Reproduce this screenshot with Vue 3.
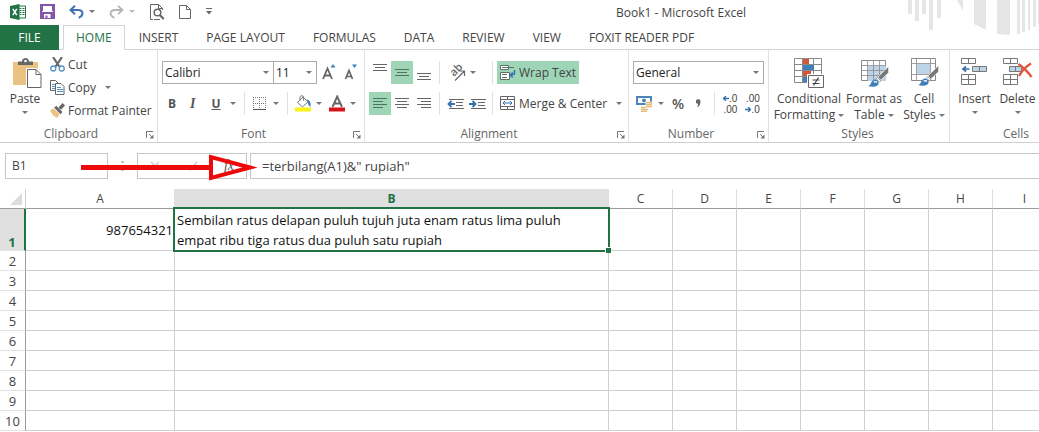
<script setup>
import { ref } from 'vue'

const tabs = ['HOME', 'INSERT', 'PAGE LAYOUT', 'FORMULAS', 'DATA', 'REVIEW', 'VIEW', 'FOXIT READER PDF']
const activeTab = ref('HOME')

const columns = ['A', 'B', 'C', 'D', 'E', 'F', 'G', 'H', 'I']
const rows = [1, 2, 3, 4, 5, 6, 7, 8, 9, 10]
const cells = {
  A1: '987654321',
  B1: 'Sembilan ratus delapan puluh tujuh juta enam ratus lima puluh empat ribu tiga ratus dua puluh satu rupiah',
}
const cellName = ref('B1')
const formula = ref('=terbilang(A1)&" rupiah"')
</script>

<template>
  <div class="app">
    <svg class="symbols" aria-hidden="true">
      <symbol id="launcher" viewBox="0 0 8 8">
        <path d="M.5 7V.5H7" fill="none" stroke="#777" />
        <path d="M3 3l3 3" stroke="#777" />
        <path d="M7.500 3.500v4h-4z" fill="#777" />
      </symbol>
      <symbol id="brush" viewBox="0 0 24 24">
        <path d="M22.500 1v6.500L14.500 15l-3-3z" fill="#777" stroke="#fff" stroke-width=".6" />
        <path d="M11 12.500l3.500 3.300-1.300 1.500-3.600-3.500z" fill="#fff" stroke="#777" stroke-width=".7" />
        <path d="M1 21.500c3-.5 2.800-3.300 4.300-5.300 1.500-1.900 4-2.300 5.700-.6 1.800 1.800 1.500 4.300-.5 5.500-2.500 1.500-6.500 1.400-9.500.4z" fill="#3f7fba" />
        <path d="M7 17.500c1.200-.9 2.600-.7 3.200.3" stroke="#fff" stroke-width="1.300" fill="none" />
      </symbol>
    </svg>

    <header class="titlebar">
      <div class="qat">
        <svg class="excel" width="17" height="16" viewBox="0 0 17 16" role="img" aria-label="Excel">
          <path d="M8 2h7.500v12H8" fill="#fff" stroke="#217346" />
          <path d="M9.500 4.500h2M12.500 4.500h2M9.500 6.500h2M12.500 6.500h2M9.500 8.500h2M12.500 8.500h2M9.500 10.500h2M12.500 10.500h2" stroke="#217346" stroke-width="1.200" />
          <path d="M0 2l9.500-2v16L0 14z" fill="#217346" />
          <path d="M2.800 4.800l4 6.400M6.800 4.800l-4 6.400" stroke="#fff" stroke-width="1.500" />
        </svg>
        <button class="ico save" aria-label="Save">
          <svg width="15" height="15" viewBox="0 0 15 15">
            <path d="M1 1h13v13H1z" fill="#fff" stroke="#8455a8" stroke-width="2" />
            <path d="M1 8h13v6H1z" fill="#8455a8" />
            <path d="M4 10h6.500v4H4z" fill="#fff" />
            <path d="M5.500 11.500h2V14h-2z" fill="#8455a8" />
            <path d="M2.500 1v6M12.500 1v6" stroke="#8455a8" />
          </svg>
        </button>
        <button class="ico undo" aria-label="Undo">
          <svg width="15" height="14" viewBox="0 0 15 14">
            <path d="M1.500 5h7.500c3 0 4.500 1.600 4.500 3.600 0 2.100-1.700 3.300-3.800 4.200" fill="none" stroke="#3e73b1" stroke-width="2" />
            <path d="M6 .8L1.500 5 6 9.200" fill="none" stroke="#3e73b1" stroke-width="2" />
          </svg>
          <i class="chev"></i>
        </button>
        <button class="ico redo" aria-label="Redo">
          <svg width="15" height="14" viewBox="0 0 15 14">
            <path d="M13.500 5H6C3 5 1.500 6.600 1.500 8.600c0 2.100 1.700 3.300 3.800 4.200" fill="none" stroke="#b5b5b5" stroke-width="1.800" />
            <path d="M9 .8L13.500 5 9 9.200" fill="none" stroke="#b5b5b5" stroke-width="1.800" />
          </svg>
          <i class="chev faint"></i>
        </button>
        <button class="ico preview" aria-label="Print Preview">
          <svg width="15" height="16" viewBox="0 0 15 16">
            <path d="M3 15.500H.5V.5h8l4 4V6M8.500.5v4h4" fill="none" stroke="#666" />
            <circle cx="7.500" cy="8.500" r="3.300" fill="#fff" stroke="#666" stroke-width="1.500" />
            <path d="M9.800 11l4 4" stroke="#666" stroke-width="2.200" />
            <path d="M4 15.500h6" stroke="#666" />
          </svg>
        </button>
        <button class="ico page" aria-label="New">
          <svg width="12" height="14" viewBox="0 0 12 14">
            <path d="M.5.5h7l4 4v9H.5zM7.500.5v4h4" fill="#fff" stroke="#666" />
          </svg>
        </button>
        <button class="ico more" aria-label="Customize Quick Access Toolbar">
          <svg width="6" height="7" viewBox="0 0 6 7">
            <path d="M0 .5h6" stroke="#666" />
            <path d="M0 3h6L3 6.500z" fill="#666" />
          </svg>
        </button>
      </div>
      <h1>Book1 - Microsoft Excel</h1>
      <svg class="decor" width="131" height="35" viewBox="0 0 131 35" aria-hidden="true">
        <path fill="#e6e6e6" d="M0 0h4v14H0zM7 0h4v21H7zM14 0h4v14h-4zM21 0h4v30h-4zM29 0h4v18h-4zM49 0h6v11zM66 0h12v30l-12-6zM89 0h13v35l-13-1zM109 0h3v34h-3zM114 0h3v32h-3zM120 0h2v30h-2zM125 0h3v27h-3zM130 0h1v24h-1z" />
      </svg>
    </header>

    <nav class="tabs">
      <button class="file">FILE</button>
      <button
        v-for="t in tabs"
        :key="t"
        class="tab"
        :class="{ active: t === activeTab }"
        @click="activeTab = t"
      >{{ t }}</button>
    </nav>

    <main class="ribbon">
      <section class="group clipboard" aria-label="Clipboard">
        <div class="body">
          <button class="big paste">
            <svg width="29" height="31" viewBox="0 0 29 31">
              <path d="M0 4h25v23H0z" fill="#eac282" />
              <path d="M5 7V3.500h4C9 1.500 10.500 0 12.500 0S16 1.500 16 3.500h4V7z" fill="#666" />
              <circle cx="12.500" cy="3" r="1.300" fill="#fff" />
              <path d="M14.500 11.500h8.500l5 5v13.500H14.500z" fill="#fff" stroke="#fff" stroke-width="3" />
              <path d="M14.500 11.500h8.500l5 5v13H14.500zM23 11.500v5h5" fill="#fff" stroke="#666" />
            </svg>
            <span>Paste</span>
            <i class="chev"></i>
          </button>
          <div class="stack">
            <button class="line">
              <svg width="15" height="15" viewBox="0 0 15 15">
                <path d="M3 0l6.300 9.500M12 0L5.700 9.500" stroke="#666" stroke-width="2.200" />
                <circle cx="3.300" cy="11.500" r="2.500" fill="#fff" stroke="#4f91c8" stroke-width="1.300" />
                <circle cx="11.700" cy="11.500" r="2.500" fill="#fff" stroke="#4f91c8" stroke-width="1.300" />
              </svg>
              <span>Cut</span>
            </button>
            <button class="line">
              <svg width="15" height="15" viewBox="0 0 15 15">
                <path d="M.5.500h5l3 3V10.500h-8z" fill="#fff" stroke="#666" />
                <path d="M2 4.500h4M2 6.500h4M2 8.500h4" stroke="#4f91c8" />
                <path d="M5.500 3.500h5.500l3 3v8H5.500z" fill="#fff" stroke="#666" />
                <path d="M7 7.500h4M7 9.500h6M7 11.500h6" stroke="#4f91c8" />
              </svg>
              <span>Copy</span>
              <i class="chev apart"></i>
            </button>
            <button class="line">
              <svg width="15" height="15" viewBox="0 0 15 15">
                <path d="M0 7.500l3.500-2.200 6 5.700L7.500 15C4.500 14.300 2 11.500 0 7.500z" fill="#eac282" />
                <path d="M4 4.500L6.500 3l6 6-2 2.200z" fill="#666" />
                <path d="M8.500 4.500l4-4.500 2.500 2.400-4 4.400z" fill="#666" />
              </svg>
              <span>Format Painter</span>
            </button>
          </div>
        </div>
        <footer><span>Clipboard</span><button class="launch" aria-label="Clipboard settings"><svg width="8" height="8"><use href="#launcher" /></svg></button></footer>
      </section>

      <section class="group font" aria-label="Font">
        <div class="body rows">
          <div class="row">
            <label class="combo wide"><select aria-label="Font name"><option>Calibri</option></select><i class="chev"></i></label>
            <label class="combo size"><select aria-label="Font size"><option>11</option></select><i class="chev"></i></label>
            <button class="ico grow" aria-label="Increase Font Size">
              <svg width="14" height="17" viewBox="0 0 14 17">
                <path d="M1 15L5.500 4.500 10 15M2.500 11.500h6" fill="none" stroke="#666" stroke-width="1.800" />
                <path d="M8.500 3.500L11 0l2.500 3.500z" fill="#3f7fba" />
              </svg>
            </button>
            <button class="ico shrink" aria-label="Decrease Font Size">
              <svg width="14" height="17" viewBox="0 0 14 17">
                <path d="M1.500 15L5 6.500 8.500 15M2.800 12.500h4.400" fill="none" stroke="#666" stroke-width="1.700" />
                <path d="M8 .5h5L10.500 4z" fill="#3f7fba" />
              </svg>
            </button>
          </div>
          <div class="row">
            <button class="glyph bold">B</button>
            <button class="glyph italic">I</button>
            <button class="glyph under"><u>U</u><i class="chev"></i></button>
            <i class="sep"></i>
            <button class="ico borders" aria-label="Borders">
              <svg width="13" height="13" viewBox="0 0 13 13">
                <path d="M0 .5h13M0 6.500h13M.5 0v12M6.500 0v12M12.500 0v12" stroke="#777" stroke-dasharray="1 1" />
                <path d="M0 12.500h13" stroke="#555" />
              </svg>
              <i class="chev"></i>
            </button>
            <i class="sep"></i>
            <button class="ico fill" aria-label="Fill Color">
              <svg width="17" height="17" viewBox="0 0 17 17">
                <path d="M2.500 7.500L8 2l5 4.800-5.500 5.200z" fill="#fff" stroke="#777" />
                <path d="M5 5.500V2.500a1.800 1.800 0 013.600 0v3.300" fill="none" stroke="#777" />
                <path d="M11.500 4.500c3 .5 4.500 2 4 7.500-1.800-1-2.800-2.800-2.500-5z" fill="#3f7fba" />
                <path d="M0 12.500h16v4H0z" fill="#fbf312" />
              </svg>
              <i class="chev"></i>
            </button>
            <button class="ico color" aria-label="Font Color">
              <svg width="17" height="17" viewBox="0 0 17 17">
                <path d="M3.500 12L8.200 1.500 13 12M5.500 8.500h5.500" fill="none" stroke="#666" stroke-width="1.900" />
                <path d="M0 12.500h16v4H0z" fill="#d91418" />
              </svg>
              <i class="chev"></i>
            </button>
          </div>
        </div>
        <footer><span>Font</span><button class="launch" aria-label="Font settings"><svg width="8" height="8"><use href="#launcher" /></svg></button></footer>
      </section>

      <section class="group alignment" aria-label="Alignment">
        <div class="body rows">
          <div class="row">
            <button class="al" aria-label="Top Align"><svg width="14" height="17" viewBox="0 0 14 17"><path d="M0 .5h14M2 3.500h10M0 6.500h14" stroke="#666" /></svg></button>
            <button class="al on" aria-label="Middle Align"><svg width="14" height="17" viewBox="0 0 14 17"><path d="M0 5.500h14M2 8.500h10M0 11.500h14" stroke="#4f7260" /></svg></button>
            <button class="al" aria-label="Bottom Align"><svg width="14" height="17" viewBox="0 0 14 17"><path d="M0 9.500h14M2 12.500h10M0 15.500h14" stroke="#666" /></svg></button>
            <i class="sep"></i>
            <button class="ico orient" aria-label="Orientation">
              <svg width="18" height="20" viewBox="0 0 18 20">
                <text x="0" y="0" transform="translate(6 14) rotate(-45)" font-family="Open Sans, sans-serif" font-size="11" font-weight="600" fill="#666">ab</text>
                <path d="M7 17.500l9-9M11.500 8h5v5" fill="none" stroke="#666" stroke-width="1.200" />
              </svg>
              <i class="chev"></i>
            </button>
            <i class="sep"></i>
            <button class="cmd on">
              <svg width="16" height="16" viewBox="0 0 16 16">
                <path d="M.5.500h8v4h-8zM.5 7.500h9v7h-9z" fill="#fff" stroke="#5c7267" />
                <path d="M2 2.500h12M2 9.500h5M2 12.500h5" stroke="#5c7267" />
                <path d="M14.500 5v3c0 1.500-1 2-3.500 2M12.800 7.500L10 10l2.800 2.500" fill="none" stroke="#3571ad" stroke-width="1.500" />
              </svg>
              <span>Wrap Text</span>
            </button>
          </div>
          <div class="row">
            <button class="al on" aria-label="Align Left"><svg width="14" height="17" viewBox="0 0 14 17"><path d="M0 3.500h14M0 6.500h10M0 9.500h14M0 12.500h10" stroke="#4f7260" /></svg></button>
            <button class="al" aria-label="Center"><svg width="14" height="17" viewBox="0 0 14 17"><path d="M0 3.500h14M2 6.500h10M0 9.500h14M2 12.500h10" stroke="#666" /></svg></button>
            <button class="al" aria-label="Align Right"><svg width="14" height="17" viewBox="0 0 14 17"><path d="M0 3.500h14M4 6.500h10M0 9.500h14M4 12.500h10" stroke="#666" /></svg></button>
            <i class="sep"></i>
            <button class="ico indent" aria-label="Decrease Indent">
              <svg width="17" height="12" viewBox="0 0 17 12">
                <path d="M2 1.500h15M9 4.500h7M9 7.500h7M2 10.500h15" stroke="#666" />
                <path d="M8 6H2M4.500 3L1.500 6l3 3" fill="none" stroke="#3571ad" stroke-width="1.800" />
              </svg>
            </button>
            <button class="ico indent" aria-label="Increase Indent">
              <svg width="17" height="12" viewBox="0 0 17 12">
                <path d="M2 1.500h15M9 4.500h7M9 7.500h7M2 10.500h15" stroke="#666" />
                <path d="M0 6h6M3.500 3l3 3-3 3" fill="none" stroke="#3571ad" stroke-width="1.800" />
              </svg>
            </button>
            <i class="sep"></i>
            <button class="cmd">
              <svg width="16" height="15" viewBox="0 0 16 15">
                <path d="M.5.500h14v13H.5zM.5 3.500h14M.5 10.500h14M7.500.500v3M7.500 10.500v3" fill="none" stroke="#666" />
                <path d="M3 7h9M5 5L3 7l2 2M10 5l2 2-2 2" fill="none" stroke="#3571ad" />
              </svg>
              <span>Merge &amp; Center</span>
              <i class="chev apart"></i>
            </button>
          </div>
        </div>
        <footer><span>Alignment</span><button class="launch" aria-label="Alignment settings"><svg width="8" height="8"><use href="#launcher" /></svg></button></footer>
      </section>

      <section class="group number" aria-label="Number">
        <div class="body rows">
          <div class="row">
            <label class="combo full"><select aria-label="Number format"><option>General</option></select><i class="chev"></i></label>
          </div>
          <div class="row">
            <button class="ico money" aria-label="Accounting Number Format">
              <svg width="17" height="16" viewBox="0 0 17 16">
                <path d="M1 1h14v7H1z" fill="#fff" stroke="#4b84b5" stroke-width="2" />
                <circle cx="8" cy="4.500" r="2" fill="#4b84b5" />
                <path d="M9.500 5.500h6v7h-6z" fill="#fff" />
                <path d="M10 6.500h6M10 8.500h6M10 10.500h6M5 11.500h5M5 13.500h7M5 15.500h6" stroke="#e3ba78" stroke-width="1.500" />
              </svg>
              <i class="chev"></i>
            </button>
            <button class="glyph pct">%</button>
            <button class="glyph comma" aria-label="Comma Style">
              <svg width="5" height="9" viewBox="0 0 5 9"><path d="M4.500 2.500c0 3-1.200 5-3.500 6C1.800 7 2 5.800 2 4.800A2.200 2.200 0 112.300.300C3.700.300 4.500 1.200 4.500 2.500z" fill="#666" /></svg>
            </button>
            <i class="sep"></i>
            <button class="decimal" aria-label="Increase Decimal">
              <span><svg width="6" height="5" viewBox="0 0 6 5"><path d="M6 2.500H1M3 0L.5 2.500 3 5" fill="none" stroke="#3571ad" stroke-width="1.300" /></svg>.0</span>
              <span>.00</span>
            </button>
            <button class="decimal" aria-label="Decrease Decimal">
              <span>.00</span>
              <span><svg width="6" height="5" viewBox="0 0 6 5"><path d="M0 2.500h5M3 0l2.500 2.500L3 5" fill="none" stroke="#3571ad" stroke-width="1.300" /></svg>.0</span>
            </button>
          </div>
        </div>
        <footer><span>Number</span><button class="launch" aria-label="Number settings"><svg width="8" height="8"><use href="#launcher" /></svg></button></footer>
      </section>

      <section class="group styles" aria-label="Styles">
        <div class="body">
          <button class="big cond">
            <svg width="31" height="31" viewBox="0 0 31 31">
              <path d="M.5.500h27v24H.5zM.5 6.500h27M.5 12.500h27M.5 18.500h27M8.500.500v24M19.500.500v24" fill="#fff" stroke="#8a8a8a" />
              <path d="M9 1h6v5H9zM9 13h8v5H9z" fill="#d3583a" />
              <path d="M9 7h11v5H9zM9 19h4v5H9z" fill="#3f7fba" />
              <path d="M13 16h18v15H13z" fill="#fff" />
              <path d="M14.500 17.500h15v12h-15z" fill="#fff" stroke="#666" />
              <path d="M18.500 22h7M18.500 25.500h7M24.500 19.500l-5 8" stroke="#444" stroke-width="1.200" />
            </svg>
            <span>Conditional<br>Formatting <i class="chev"></i></span>
          </button>
          <button class="big table">
            <svg width="31" height="31" viewBox="0 0 31 31">
              <path d="M2.500 2.500h24v20h-24z" fill="#fff" stroke="#8a8a8a" />
              <path d="M9 8h18v15H9z" fill="#bcd3e8" />
              <path d="M2.500 7.500h24M2.500 12.500h24M2.500 17.500h24M8.500 2.500v20M14.500 2.500v20M20.500 2.500v20" stroke="#8a8a8a" stroke-width=".8" />
              <use href="#brush" x="8" y="7" width="23" height="24" />
            </svg>
            <span>Format as<br>Table <i class="chev"></i></span>
          </button>
          <button class="big cell">
            <svg width="31" height="31" viewBox="0 0 31 31">
              <path d="M2.500.500h24v22h-24z" fill="#fff" stroke="#8a8a8a" />
              <path d="M2.500 5.500h24M2.500 16.500h24M7.500.500v22M21.500.500v22" stroke="#8a8a8a" stroke-width=".8" />
              <path d="M8 6h13v10H8z" fill="#bcd3e8" />
              <use href="#brush" x="8" y="6" width="23" height="24" />
            </svg>
            <span>Cell<br>Styles <i class="chev"></i></span>
          </button>
        </div>
        <footer><span>Styles</span></footer>
      </section>

      <section class="group cells" aria-label="Cells">
        <div class="body">
          <button class="big insert">
            <svg width="27" height="28" viewBox="0 0 27 28">
              <path d="M.5.500h14v5H.5zM7.500.500v5M.5 16.500h14v10H.5zM7.500 16.500v10M.5 21.500h14" fill="#fff" stroke="#777" />
              <path d="M11.500 8.500h14v5h-14z" fill="#bcd3e8" stroke="#777" />
              <path d="M18.500 8.500v5" stroke="#777" />
              <path d="M8.500 11H2.500M5 8.500L2 11l3 2.500" fill="none" stroke="#3571ad" stroke-width="1.700" />
            </svg>
            <span>Insert</span>
            <i class="chev"></i>
          </button>
          <button class="big delete">
            <svg width="30" height="28" viewBox="0 0 30 28">
              <path d="M.5.500h14v5H.5zM7.500.500v5M.5 16.500h14v10H.5zM7.500 16.500v10M.5 21.500h14" fill="#fff" stroke="#777" />
              <path d="M6.500 8.500h12v5h-12z" fill="#bcd3e8" stroke="#777" />
              <path d="M12.500 8.500v5" stroke="#777" />
              <path d="M15.500 6c4 3 9 7 13 13M28 5.500c-5 3-9 7-12 12.500" fill="none" stroke="#e0583c" stroke-width="2.400" />
            </svg>
            <span>Delete</span>
            <i class="chev"></i>
          </button>
        </div>
        <footer><span>Cells</span></footer>
      </section>
    </main>

    <div class="formulabar">
      <label class="namebox"><input v-model="cellName" aria-label="Name box"><i class="chev"></i></label>
      <svg class="grip" width="3" height="12" viewBox="0 0 3 12" aria-hidden="true"><path d="M1.500 1v2M1.500 5v2M1.500 9v2" stroke="#aaa" stroke-width="2" /></svg>
      <div class="fxbox">
        <button aria-label="Cancel"><svg width="10" height="10" viewBox="0 0 10 10"><path d="M1 1l8 8M9 1L1 9" stroke="#ccc" stroke-width="1.500" /></svg></button>
        <button aria-label="Enter"><svg width="12" height="10" viewBox="0 0 12 10"><path d="M1 5.500L4 9l7-8" fill="none" stroke="#ccc" stroke-width="1.500" /></svg></button>
        <button class="fx" aria-label="Insert Function">fx</button>
      </div>
      <input v-model="formula" class="formula" aria-label="Formula bar">
      <svg class="pointer" width="178" height="27" viewBox="0 0 178 27" aria-hidden="true">
        <path d="M0 13.500h130" stroke="#ee0a0a" stroke-width="5" />
        <path d="M130 3v21l39-10.500z" fill="none" stroke="#ee0a0a" stroke-width="4" stroke-miterlimit="10" />
      </svg>
    </div>

    <div class="sheet">
      <table>
        <colgroup>
          <col class="c-head"><col class="c-a"><col class="c-b">
          <col v-for="n in 7" :key="n" class="c-std">
          <col>
        </colgroup>
        <thead>
          <tr>
            <td class="corner"><svg width="12" height="12" viewBox="0 0 12 12"><path d="M12 0v12H0z" fill="#dcdcdc" /></svg></td>
            <th v-for="c in columns" :key="c" scope="col" :class="{ current: c === 'B' }">{{ c }}</th>
            <td class="corner"></td>
          </tr>
        </thead>
        <tbody>
          <tr v-for="r in rows" :key="r" :class="{ tall: r === 1 }">
            <th scope="row" :class="{ current: r === 1 }">{{ r }}</th>
            <td v-for="c in columns" :key="c" :class="{ num: c === 'A', selected: c + r === cellName }">
              {{ cells[c + r] }}<i v-if="c + r === cellName" class="outline"></i>
            </td>
            <td></td>
          </tr>
        </tbody>
      </table>
    </div>
  </div>
</template>

<style>
html, body { margin: 0; background: #fff; }
</style>

<style scoped>
.app {
  height: 100vh;
  display: flex;
  flex-direction: column;
  overflow: hidden;
  background: #fff;
  color: #444;
  font: 12px/16px "Open Sans", "Noto Sans", sans-serif;
}
.app *, .app *::before { box-sizing: border-box; }
button, input, select { font: inherit; color: inherit; margin: 0; }
button { display: inline-flex; align-items: center; padding: 0; border: 0; background: none; white-space: nowrap; flex: none; }
svg { display: block; flex: none; }
.symbols { position: absolute; width: 0; height: 0; }
.chev { display: inline-block; flex: none; width: 0; height: 0; border: 3px solid transparent; border-top-color: #777; border-bottom: 0; }
.chev.faint { border-top-color: #bbb; }

.titlebar { position: relative; display: flex; flex: none; height: 25px; }
.qat { display: flex; align-items: center; flex: none; width: 323px; height: 23px; padding-left: 10px; }
.save { margin-left: 13px; }
.undo { margin-left: 14px; gap: 5px; }
.redo { margin-left: 14px; gap: 5px; }
.preview { margin-left: 15px; }
.page { margin-left: 14px; }
.more { margin-left: 15px; }
h1 { flex: 1; margin: 0; padding-top: 5px; font-size: 12px; line-height: 16px; font-weight: 400; text-align: center; }
.decor { position: absolute; top: 0; right: 0; }

.tabs { position: relative; display: flex; flex: none; height: 25px; border-bottom: 1px solid #d4d4d4; font-size: 12px; }
.tabs button { height: 25px; }
.file { width: 59px; justify-content: center; margin-right: 4px; background: #217346; color: #fff; }
.tab { padding: 0 14px; }
.tab.active { padding: 0 12px; border: 1px solid #d4d4d4; border-bottom-color: #fff; background: #fff; color: #217346; }

.ribbon { display: flex; flex: none; height: 93px; border-bottom: 1px solid #d0d0d0; overflow: hidden; }
.group { display: flex; flex-direction: column; flex: none; border-right: 1px solid #e1e1e1; }
.body { display: flex; flex: 1; }
.rows { flex-direction: column; gap: 8px; padding: 11px 4px 0; }
.row { display: flex; align-items: center; height: 23px; }
.group footer { display: flex; align-items: center; height: 17px; padding-right: 3px; color: #666; }
.group footer span { flex: 1; text-align: center; }
.launch { margin: 2px 0 0 4px; }
.clipboard { width: 158px; }
.font { width: 207px; }
.alignment { width: 264px; }
.number { width: 140px; }
.styles { width: 181px; }
.cells { width: 136px; }

.big { flex-direction: column; text-align: center; }
.big .chev { margin-top: 4px; }
.big span .chev { margin: 0 0 2px; }
.paste { width: 50px; padding-top: 8px; }
.paste svg { margin: 0 0 2px 4px; }
.stack { display: flex; flex-direction: column; padding: 3px 0 0; }
.line { height: 23px; gap: 3px; }
.apart { margin-left: 6px; }

.combo { display: grid; align-items: center; height: 23px; border: 1px solid #ababab; background: #fff; color: #222; }
.combo select, .combo .chev { grid-area: 1 / 1; }
.combo select { width: 100%; height: 21px; padding: 0 2px; border: 0; background: none; appearance: none; outline: 0; }
.combo .chev { justify-self: end; margin-right: 4px; }
.wide { width: 112px; }
.size { width: 44px; margin-left: -1px; }
.full { width: 132px; }
.grow { margin-left: 5px; }
.shrink { margin-left: 8px; }
.sep { flex: none; width: 1px; height: 23px; background: #e1e1e1; }
.glyph { font-weight: 700; font-size: 12px; color: #555; }
.bold { margin-left: 6px; }
.italic { margin-left: 14px; font-family: "Liberation Serif", serif; font-style: italic; font-size: 14px; }
.under { margin: 0 8px 0 16px; gap: 9px; }
.borders { margin: 0 8px; gap: 7px; }
.fill { margin-left: 7px; gap: 4px; }
.color { margin-left: 7px; gap: 4px; }

.al { width: 22px; height: 23px; justify-content: center; }
.on { background: #9fd5b7; }
.alignment .sep { margin: 0 4px; }
.orient { width: 44px; padding-left: 4px; gap: 4px; }
.orient svg { overflow: visible; }
.indent { width: 22px; padding-left: 3px; }
.alignment .indent + .sep { margin-left: 4px; }
.cmd { height: 23px; padding: 0 3px; gap: 3px; }

.money { margin-left: 3px; gap: 5px; }
.pct { margin-left: 8px; font-size: 14px; font-weight: 600; }
.comma { margin: 0 13px 0 12px; }
.decimal { flex-direction: column; align-items: flex-end; margin-left: 8px; font: 10px/11px "Liberation Sans", sans-serif; }
.decimal span { display: flex; align-items: center; }

.styles .body { justify-content: center; padding-top: 8px; }
.big.cond { width: 72px; }
.big.table { width: 58px; }
.big.cell { width: 42px; }
.styles .big svg { margin-bottom: 2px; }
.cells .body { padding: 8px 0 0 3px; }
.cells .big { width: 43px; }
.cells .big svg { margin-bottom: 5px; }

.formulabar { position: relative; display: flex; flex: none; align-items: center; height: 46px; padding: 0 0 0 5px; }
.formulabar input { border: 0; outline: 0; background: none; }
.namebox { display: flex; align-items: center; width: 103px; height: 26px; padding-right: 7px; border: 1px solid #c6c6c6; }
.namebox input { flex: 1; min-width: 0; padding: 0 6px; }
.grip { margin: 0 13px; }
.fxbox { display: flex; align-items: center; justify-content: space-between; width: 110px; height: 26px; padding: 0 12px; border: 1px solid #c6c6c6; }
.fx { font: italic 14px/16px "Liberation Serif", serif; color: #555; }
.formulabar .formula { flex: 1; min-width: 0; height: 26px; margin-left: 3px; padding: 0 11px; border: 1px solid #c6c6c6; border-right: 0; font-size: 13px; }
.pointer { position: absolute; left: 81px; top: 11px; }

.sheet { flex: 1; min-height: 0; overflow: hidden; }
table { width: 100%; min-width: 1057px; table-layout: fixed; border-collapse: separate; border-spacing: 0; }
.c-head { width: 26px; }
.c-a { width: 149px; }
.c-b { width: 434px; }
.c-std { width: 64px; }
th, td { height: 20px; padding: 0; border: 0 solid #d0d0d0; border-width: 0 1px 1px 0; font-weight: 400; }
th { text-align: center; }
thead th { border-right-color: #ddd; border-bottom-color: #9c9c9c; }
.corner { border-bottom-color: #9c9c9c; }
.corner svg { margin-left: 10px; }
tbody th { border-right-color: #9c9c9c; border-bottom-color: #e1e1e1; font-size: 13px; }
tbody td { color: #111; font-size: 13px; line-height: 20px; }
th.current { background: #e0e0e0; color: #217346; font-weight: 700; }
.tall th, .tall td { height: 42px; }
.tall th { vertical-align: bottom; border-right: 2px solid #217346; }
td.num { padding-right: 1px; text-align: right; }
td.selected { position: relative; padding: 0 8px 0 2px; }
.outline { position: absolute; inset: -2px; border: 2px solid #217346; }
.outline::before { content: ""; position: absolute; right: -3px; bottom: -3px; width: 6px; height: 6px; background: #217346; border: solid #fff; border-width: 1px 0 0 1px; }
</style>
